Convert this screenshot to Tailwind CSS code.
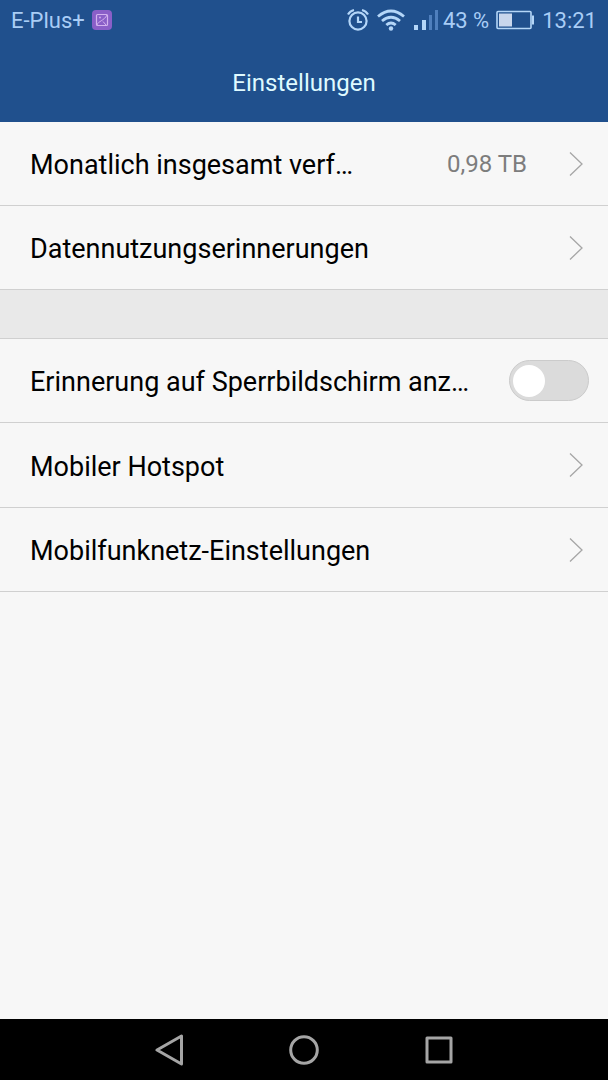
<!DOCTYPE html>
<html lang="de">
<head>
<meta charset="utf-8">
<meta name="viewport" content="width=device-width, initial-scale=1">
<title>Einstellungen</title>
<script src="https://cdn.jsdelivr.net/npm/@tailwindcss/browser@4"></script>
</head>
<body class="flex min-h-screen flex-col bg-[#f7f7f7] font-['Roboto',sans-serif] text-black">
  <header class="bg-[#20508d]">
    <div class="flex h-10 items-center px-[11px] text-[22px] text-[#a9cdf6]">
      <span>E-Plus+</span>
      <svg class="ml-[7px]" width="20" height="20" viewBox="0 0 20 20" fill="none" aria-hidden="true">
        <rect width="20" height="20" rx="4" fill="#8a5fc8"/>
        <g stroke="#d3b2ef"><rect x="4.5" y="4.5" width="11" height="11" rx="1" stroke-width="1.2"/><path d="M5 15C6 11 12 11 15 5M11 11.500 14 15"/><circle cx="8" cy="7.500" r=".9" fill="#d3b2ef" stroke="none"/></g>
      </svg>
      <div class="ml-auto flex items-center">
        <svg width="22" height="24" viewBox="0 0 22 24" fill="none" stroke="#b4d6f8" stroke-width="2.2" aria-label="Wecker">
          <circle cx="11" cy="13" r="8.6"/><path d="M11 8.500V14h4"/><path d="M1 6.500Q3 3 7 2M21 6.500Q19 3 15 2"/>
        </svg>
        <svg class="ml-2" width="28" height="24" viewBox="0 0 28 24" fill="none" stroke="#b4d6f8" stroke-width="2.8" aria-label="WLAN">
          <path d="M1 8.500Q14-2.500 27 8.500M5 13Q14 5.500 23 13M9.300 17Q14 13 18.700 17"/><circle cx="14" cy="20.500" r="2.2" fill="#b4d6f8" stroke="none"/>
        </svg>
        <svg class="ml-2" width="26" height="24" viewBox="0 0 26 24" aria-label="Signal">
          <path fill="#b4d6f8" d="M1 17h4v5H1zM9 12h4v10H9z"/><path fill="#4f7fbd" d="M16 7h3v15h-3zM22 2h3v20h-3z"/>
        </svg>
        <span class="ml-1">43 %</span>
        <svg class="ml-[6px]" width="40" height="20" viewBox="0 0 40 20" fill="none" aria-label="Akku">
          <rect x="2" y="1.500" width="34" height="17" rx="1" stroke="#b4d6f8" stroke-width="1.6"/><path fill="#c9d7ec" d="M4 3.500h13v13H4z"/><path fill="#b4d6f8" d="M37 5.500h2v9h-2z"/>
        </svg>
        <span class="ml-[7px]">13:21</span>
      </div>
    </div>
    <h1 class="flex h-[82px] items-center justify-center pt-1 text-2xl text-[#dffaff]">Einstellungen</h1>
  </header>

  <main class="flex-1">
    <button type="button" class="flex h-[84px] w-full items-center border-b border-[#d0d0d0] pr-6 pl-[30px] text-left">
      <span class="pt-1 text-[27px]">Monatlich insgesamt verf…</span>
      <span class="ml-auto text-2xl text-[#7d7d7d]">0,98 TB</span>
      <svg class="ml-[42px]" width="15" height="26" viewBox="0 0 15 26" fill="none" stroke="#a6a6a6" stroke-width="1.3" aria-hidden="true"><path d="M1 1.500 13 13 1 24.500"/></svg>
    </button>
    <button type="button" class="flex h-[84px] w-full items-center justify-between border-b border-[#d0d0d0] pr-6 pl-[30px] text-left">
      <span class="pt-1 text-[27px]">Datennutzungserinnerungen</span>
      <svg width="15" height="26" viewBox="0 0 15 26" fill="none" stroke="#a6a6a6" stroke-width="1.3" aria-hidden="true"><path d="M1 1.500 13 13 1 24.500"/></svg>
    </button>
    <div class="h-[49px] border-b border-[#d0d0d0] bg-[#e9e9e9]"></div>
    <label class="flex h-[84px] items-center justify-between border-b border-[#d0d0d0] pr-[19px] pl-[30px]">
      <span class="pt-1 text-[27px]">Erinnerung auf Sperrbildschirm anz…</span>
      <input type="checkbox" role="switch" class="flex h-[41px] w-20 shrink-0 appearance-none items-center rounded-full border border-[#cbcbcb] bg-[#dbdbdb] px-[3px] before:size-8 before:rounded-full before:bg-white before:content-[''] checked:justify-end checked:bg-[#20508d]">
    </label>
    <button type="button" class="flex h-[85px] w-full items-center justify-between border-b border-[#d0d0d0] pr-6 pl-[30px] text-left">
      <span class="pt-1 text-[27px]">Mobiler Hotspot</span>
      <svg width="15" height="26" viewBox="0 0 15 26" fill="none" stroke="#a6a6a6" stroke-width="1.3" aria-hidden="true"><path d="M1 1.500 13 13 1 24.500"/></svg>
    </button>
    <button type="button" class="flex h-[84px] w-full items-center justify-between border-b border-[#d0d0d0] pr-6 pl-[30px] text-left">
      <span class="pt-1 text-[27px]">Mobilfunknetz-Einstellungen</span>
      <svg width="15" height="26" viewBox="0 0 15 26" fill="none" stroke="#a6a6a6" stroke-width="1.3" aria-hidden="true"><path d="M1 1.500 13 13 1 24.500"/></svg>
    </button>
  </main>

  <nav class="flex h-[61px] items-center justify-center gap-[103px] bg-black">
    <button type="button" aria-label="Zurück"><svg width="32" height="32" viewBox="0 0 32 32" fill="none" stroke="#a5a5a5" stroke-width="3" stroke-linejoin="round"><path d="M28.500 2v28L4 16z"/></svg></button>
    <button type="button" aria-label="Startbildschirm"><svg width="32" height="32" viewBox="0 0 32 32" fill="none" stroke="#a5a5a5" stroke-width="3"><circle cx="16" cy="16" r="13.3"/></svg></button>
    <button type="button" aria-label="Letzte Apps"><svg width="32" height="32" viewBox="0 0 32 32" fill="none" stroke="#a5a5a5" stroke-width="3" stroke-linejoin="round"><path d="M4 4h24v24H4z"/></svg></button>
  </nav>
</body>
</html>
